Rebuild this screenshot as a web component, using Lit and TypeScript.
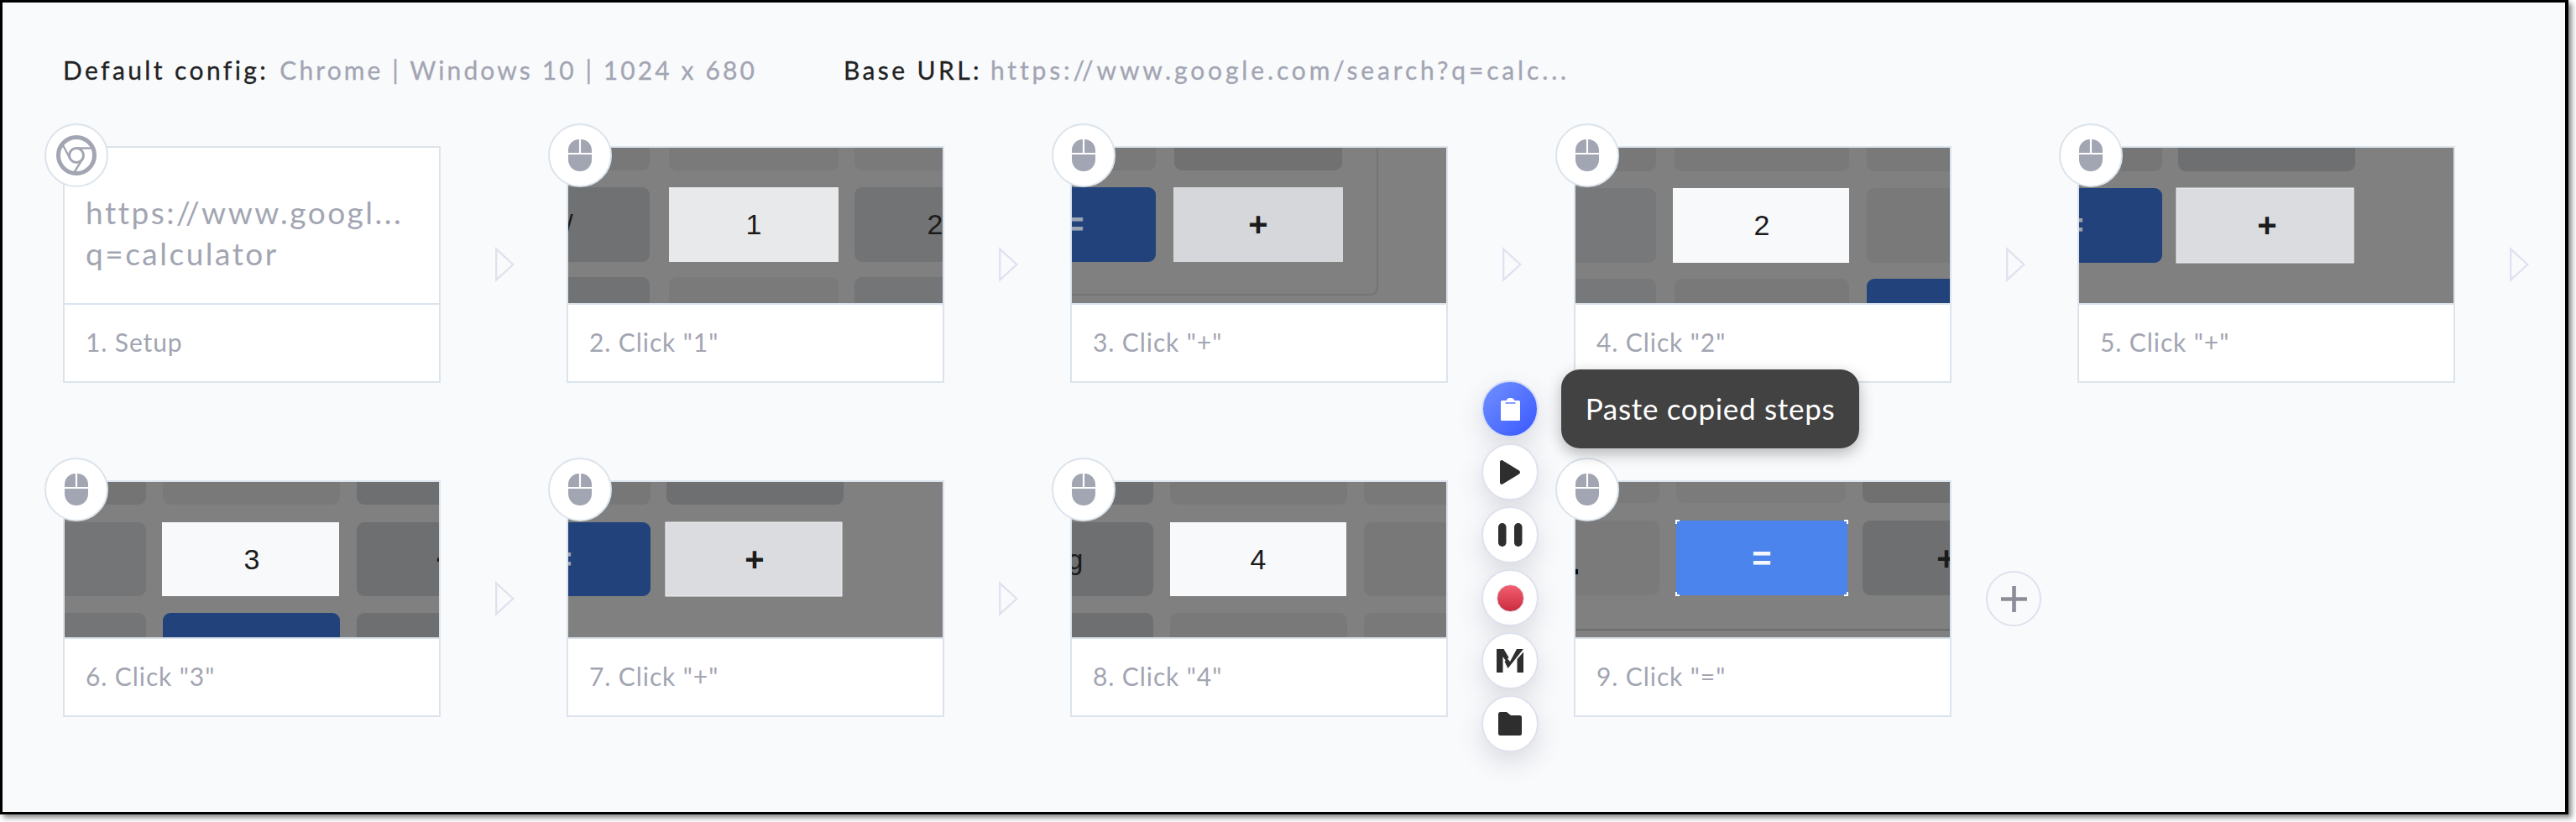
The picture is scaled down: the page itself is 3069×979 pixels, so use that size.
import { LitElement, html, css, svg } from "lit";
import { customElement } from "lit/decorators.js";

// rect: x, y, w, h, fill, square corners?
type Key = [number, number, number, number, string, boolean?];
type Glyph = [number, number, string, string?];
type Step = { label: string; keys: Key[]; glyphs: Glyph[]; corners?: boolean };

const GREY = "#787878";
const DARK = "#6e6f71";
const BLUE = "#21427a";
const WHITE = "#f8f9fb";
const LIGHT = "#dbdce0";

const STEPS: Step[] = [
  {
    label: '2. Click "1"',
    keys: [
      [-20, -60, 117, 87, GREY], [120, -60, 202, 87, "#7a7a7a"], [341, -60, 125, 87, "#7a7a7a"],
      [-20, 47, 117, 89, "#707172"], [120, 47, 202, 89, "#e8e9ea", true], [341, 47, 125, 89, "#727374"],
      [-20, 154, 117, 60, "#717274"], [120, 154, 202, 60, "#7a7a7a"], [341, 154, 125, 60, "#747576"],
    ],
    glyphs: [[221, 103, "1"], [1, 103, "/"], [437, 103, "2"]],
  },
  {
    label: '3. Click "+"',
    keys: [
      [-20, -60, 120, 87, "#797979"], [122, -60, 200, 87, "#717171"],
      [-20, 47, 120, 89, BLUE], [121, 47, 202, 89, "#d6d7da", true],
    ],
    glyphs: [[222, 103, "+"], [3, 103, "=", "#9aa5b5"]],
  },
  {
    label: '4. Click "2"',
    keys: [
      [-20, -60, 116, 88, GREY], [118, -60, 208, 88, "#797979"], [347, -60, 120, 88, "#797979"],
      [-20, 48, 116, 89, "#777879"], [116, 48, 210, 89, WHITE, true], [347, 48, 120, 89, "#797979"],
      [-20, 156, 116, 60, "#777879"], [118, 156, 208, 60, "#797979"], [347, 156, 120, 60, BLUE],
    ],
    glyphs: [[222, 104, "2"]],
  },
  {
    label: '5. Click "+"',
    keys: [
      [-20, -60, 119, 88, "#767676"], [118, -60, 211, 88, DARK],
      [-20, 48, 119, 89, BLUE], [116, 48, 211, 89, LIGHT, true],
    ],
    glyphs: [[224, 104, "+"], [-6, 104, "=", "#9aa5b5"]],
  },
  {
    label: '6. Click "3"',
    keys: [
      [-20, -60, 117, 87, "#747474"], [117, -60, 211, 87, "#797979"], [348, -60, 120, 87, DARK],
      [-20, 48, 117, 88, "#747576"], [116, 48, 211, 88, WHITE, true], [348, 48, 120, 88, DARK],
      [-20, 156, 117, 60, "#747576"], [117, 156, 211, 60, BLUE], [348, 156, 120, 60, DARK],
    ],
    glyphs: [[223, 104, "3"], [454, 104, "+"]],
  },
  {
    label: '7. Click "+"',
    keys: [
      [-20, -60, 118, 87, "#777"], [117, -60, 211, 87, DARK],
      [-20, 48, 118, 88, BLUE], [116, 48, 210, 88, LIGHT, true],
    ],
    glyphs: [[222, 104, "+"], [-7, 104, "=", "#9aa5b5"]],
  },
  {
    label: '8. Click "4"',
    keys: [
      [-20, -60, 117, 87, DARK], [117, -60, 211, 87, "#797979"], [348, -60, 120, 87, "#797979"],
      [-20, 48, 117, 88, DARK], [117, 48, 210, 88, WHITE, true], [348, 48, 120, 88, "#787878"],
      [-20, 156, 117, 60, DARK], [117, 156, 211, 60, "#797979"], [348, 156, 120, 60, "#797979"],
    ],
    glyphs: [[222, 104, "4"], [4, 104, "g"]],
  },
  {
    label: '9. Click "="',
    corners: true,
    keys: [
      [-20, -60, 120, 85, "#7a7a7a"], [120, -60, 202, 85, "#7b7b7b"], [342, -60, 120, 85, "#707070"],
      [-20, 46, 120, 89, "#7a7a7a"], [120, 46, 204, 89, "#4a84ec", true], [342, 46, 120, 89, "#6e6f71"],
    ],
    glyphs: [[222, 103, "=", "#f4f7fd"], [0, 108, ".", "#000"], [442, 103, "+"]],
  },
];

const mouseIcon = html`<svg class="mouse" viewBox="0 0 28 38">
  <path d="M12.9 0C5.6 0 0 5.6 0 13v3h12.9zM15.1 0C22.4 0 28 5.6 28 13v3H15.1zM0 18h28v6c0 8-6 14-14 14S0 32 0 24z" />
</svg>`;

const chromeIcon = html`<svg class="chrome" viewBox="0 0 48 48" fill="none" stroke="#a2a5b2">
  <circle cx="24" cy="24" r="21.500" stroke-width="5" />
  <circle cx="24" cy="24" r="8.500" stroke-width="3" />
  <path d="M24 15.500H44M16.600 28.200 7.500 11M31.400 28 21 45" stroke-width="2.400" />
</svg>`;

const arrow = html`<svg class="arrow" viewBox="0 0 23 42" fill="none">
  <path d="M1.200 2.600 21.400 21 1.200 39.400z" stroke="#dfe1ee" stroke-width="2.200" />
</svg>`;

function thumb(step: Step) {
  return html`<svg class="thumb" viewBox="0 0 446 185">
    <rect width="446" height="185" fill="#808080" />
    ${step.keys.map(([x, y, w, h, fill, square]) =>
      svg`<rect x=${x} y=${y} width=${w} height=${h} rx=${square ? 0 : 9} fill=${fill}
        stroke=${fill === LIGHT ? "#f1f2f4" : "none"} stroke-width="1" />`
    )}
    ${step.label.startsWith("3.")
      ? svg`<path d="M364 0V165q0 10-10 10H0" fill="none" stroke="#747474" stroke-width="2" />`
      : ""}
    ${step.corners
      ? svg`<path d="M0 176H446" stroke="#6c6c6c" stroke-width="2" />
          <path d="M120 50V46h4M320 46h4v4M120 131v4h4M320 135h4v-4" fill="none" stroke="#fff" stroke-width="2" />`
      : ""}
    ${step.glyphs.map(([x, y, t, fill]) => {
      const sign = t === "+" || t === "=" || t === ".";
      return svg`<text class=${sign ? "sign" : ""} x=${x} y=${sign ? y + 2 : y} text-anchor="middle"
        fill=${fill ?? "#1b1b1b"}>${t}</text>`;
    })}
  </svg>`;
}

@customElement("step-card")
export class StepCard extends LitElement {
  static properties = { step: { attribute: false }, setup: { type: Boolean } };
  step?: Step;
  setup = false;

  static styles = css`
    :host {
      display: block;
      position: relative;
      width: 450px;
      height: 282px;
      box-sizing: border-box;
      background: #fff;
      border: 2px solid #dbe4ec;
      font-family: Lato, "Liberation Sans", sans-serif;
      color: #a2a5b2;
    }
    .badge {
      position: absolute;
      left: -24px;
      top: -29px;
      width: 76px;
      height: 76px;
      box-sizing: border-box;
      border: 2px solid #dbe4ec;
      border-radius: 50%;
      background: #fff;
      display: flex;
      align-items: center;
      justify-content: center;
      z-index: 1;
    }
    .mouse {
      width: 28px;
      height: 38px;
      fill: #a2a5b2;
    }
    .chrome {
      width: 48px;
      height: 48px;
    }
    .top {
      height: 185px;
      border-bottom: 2px solid #dbe4ec;
    }
    .thumb {
      display: block;
      width: 100%;
      height: 185px;
      font-family: "Liberation Sans", Arial, sans-serif;
      font-size: 34px;
    }
    .thumb .sign {
      font-size: 40px;
      font-weight: 700;
    }
    .url {
      box-sizing: border-box;
      height: 185px;
      padding: 52px 0 0 25px;
      font-size: 37px;
      line-height: 49px;
      letter-spacing: 2.500px;
      white-space: nowrap;
    }
    .label {
      padding-left: 25px;
      height: 88px;
      display: flex;
      align-items: center;
      font-size: 30px;
      letter-spacing: 0.900px;
    }
  `;

  render() {
    return html`
      <div class="badge">${this.setup ? chromeIcon : mouseIcon}</div>
      <div class="top">
        ${this.setup
          ? html`<div class="url">https://www.googl...<br />q=calculator</div>`
          : thumb(this.step!)}
      </div>
      <div class="label">${this.setup ? "1. Setup" : this.step!.label}</div>
    `;
  }
}

@customElement("app-root")
export class AppRoot extends LitElement {
  static styles = css`
    :host {
      display: block;
      width: 3069px;
      height: 979px;
      background: #fff;
      font-family: Lato, "Liberation Sans", sans-serif;
    }
    .frame {
      position: relative;
      box-sizing: border-box;
      width: 3060px;
      height: 970px;
      border: 3px solid #000;
      border-right-width: 4px;
      background: #f9fafc;
      box-shadow: 4px 4px 6px rgba(0, 0, 0, 0.45);
      padding: 60px 0 0 72px;
    }
    .head {
      display: flex;
      height: 40px;
      line-height: 40px;
      font-size: 30px;
      letter-spacing: 3.400px;
      white-space: nowrap;
      color: #222;
      -webkit-text-stroke: 0.300px;
      margin-bottom: 71px;
    }
    .head span {
      color: #a2a5b2;
      letter-spacing: 3.100px;
      margin-left: 13px;
    }
    .head div:first-child {
      width: 930px;
    }
    .head .long {
      letter-spacing: 3.850px;
      margin-left: 10px;
    }
    .steps {
      display: grid;
      grid-template-columns: repeat(5, 600px);
      row-gap: 116px;
    }
    .cell {
      display: flex;
      align-items: center;
    }
    .arrow {
      width: 23px;
      height: 42px;
      margin-left: 65px;
    }
    .add {
      width: 66px;
      height: 66px;
      margin-left: 41px;
      box-sizing: border-box;
      border: 2px solid #dfe1ee;
      border-radius: 50%;
      display: flex;
      align-items: center;
      justify-content: center;
    }
    .add svg {
      width: 31px;
      height: 31px;
      fill: #8b8d99;
    }
    .tools {
      position: absolute;
      left: 1762px;
      top: 450px;
      display: flex;
      flex-direction: column;
      gap: 7px;
      z-index: 2;
    }
    .tool {
      width: 68px;
      height: 68px;
      box-sizing: border-box;
      border: 2px solid #dfe1ee;
      border-radius: 50%;
      background: #fff;
      display: flex;
      align-items: center;
      justify-content: center;
      box-shadow: 0 12px 30px rgba(60, 60, 80, 0.16);
    }
    .tool svg {
      fill: #2e2e2e;
      display: block;
    }
    .tool.active {
      border-color: #d5dcf5;
      background: linear-gradient(135deg, #7091ff, #3a58ff);
    }
    .tool.active svg {
      fill: #fff;
    }
    .dot {
      width: 33px;
      height: 33px;
      box-sizing: border-box;
      border: 1px solid #dfe1ee;
      border-radius: 50%;
      background: linear-gradient(#f2606f, #cb2b3f);
    }
    .tip {
      position: absolute;
      left: 1857px;
      top: 437px;
      width: 355px;
      height: 94px;
      box-sizing: border-box;
      border-radius: 22px;
      background: rgba(62, 62, 62, 0.98);
      box-shadow: 0 6px 18px rgba(0, 0, 0, 0.28);
      color: #fff;
      font-size: 35px;
      line-height: 92px;
      text-align: center;
      letter-spacing: 0.700px;
      z-index: 3;
    }
  `;

  render() {
    return html`
      <div class="frame">
        <div class="head">
          <div>Default config:<span>Chrome | Windows 10 | 1024 x 680</span></div>
          <div>Base URL:<span class="long">https://www.google.com/search?q=calc...</span></div>
        </div>
        <div class="steps">
          <div class="cell"><step-card setup></step-card>${arrow}</div>
          ${STEPS.map(
            (s, i) => html`<div class="cell">
              <step-card .step=${s}></step-card>
              ${i === STEPS.length - 1
                ? html`<div class="add">
                    <svg viewBox="0 0 31 31"><path d="M13.200 0h4.600v13.200H31v4.600H17.800V31h-4.600V17.800H0v-4.600h13.200z" /></svg>
                  </div>`
                : arrow}
            </div>`
          )}
        </div>
        <div class="tools">
          <div class="tool active">
            <svg width="23" height="27" viewBox="0 0 23 27">
              <path d="M1.500 3H7V1.800L9.500 0h4L16 1.800V3h5.500A1.500 1.500 0 0 1 23 4.500V26a1 1 0 0 1-1 1H1a1 1 0 0 1-1-1V4.500A1.500 1.500 0 0 1 1.500 3z" />
              <path d="M5.500 6H17.500" stroke="#5878ff" stroke-width="1.400" />
            </svg>
          </div>
          <div class="tool">
            <svg width="24" height="29" viewBox="0 0 24 29">
              <path d="M0 2.500C0 .6 1.600-.5 3.300.4L22.600 12.200c1.800 1.100 1.800 3.500 0 4.600L3.300 28.600C1.600 29.500 0 28.400 0 26.500z" />
            </svg>
          </div>
          <div class="tool">
            <svg width="29" height="28" viewBox="0 0 29 28">
              <rect width="9.500" height="28" rx="4.700" />
              <rect x="19" width="9.500" height="28" rx="4.700" />
            </svg>
          </div>
          <div class="tool"><div class="dot"></div></div>
          <div class="tool">
            <svg width="32" height="28" viewBox="0 0 32 28">
              <path d="M0 0h8.500l6 10-3.600 4L7.500 9v19H0zM9.600 15l3.400-3.600 3 3.600L24 0h8L13.500 23zM32 3.500V28h-7.500V12z" />
            </svg>
          </div>
          <div class="tool">
            <svg width="28" height="28" viewBox="0 0 28 28">
              <path d="M0 2.500A2.500 2.500 0 0 1 2.500 0H10l5 4h10.500A2.500 2.500 0 0 1 28 6.500v19a2.500 2.500 0 0 1-2.500 2.500h-23A2.500 2.500 0 0 1 0 25.500z" />
            </svg>
          </div>
        </div>
        <div class="tip">Paste copied steps</div>
      </div>
    `;
  }
}
